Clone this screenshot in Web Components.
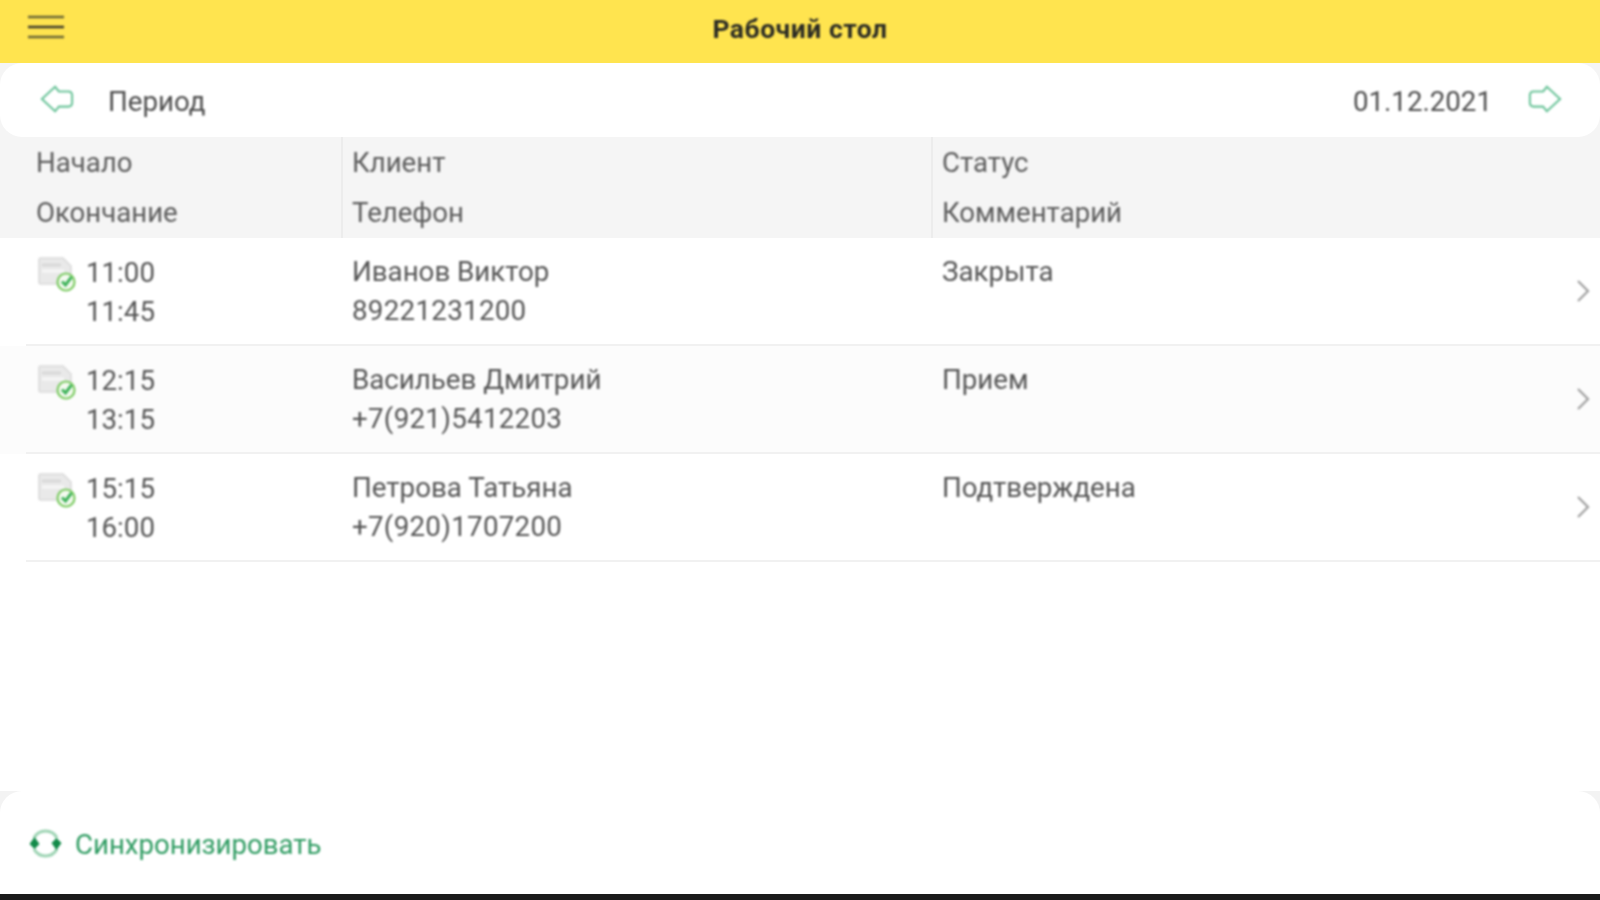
<!DOCTYPE html>
<html lang="ru">
<head>
<meta charset="utf-8">
<title>Рабочий стол</title>
<style>
    html, body {
        margin: 0;
        height: 100%;
        background: #fff;
        font-family: Roboto, "Liberation Sans", sans-serif;
        color: #4a4a4a;
    }
    desk-app {
        height: 900px;
    }
</style>
</head>
<body>
<desk-app>
    <app-header title="Рабочий стол"></app-header>
    <period-bar label="Период" date="01.12.2021"></period-bar>
    <list-head></list-head>
    <visit-row start="11:00" end="11:45" client="Иванов Виктор" phone="89221231200" status="Закрыта"></visit-row>
    <visit-row start="12:15" end="13:15" client="Васильев Дмитрий" phone="+7(921)5412203" status="Прием" shaded></visit-row>
    <visit-row start="15:15" end="16:00" client="Петрова Татьяна" phone="+7(920)1707200" status="Подтверждена"></visit-row>
    <sync-footer slot="footer">Синхронизировать</sync-footer>
</desk-app>

<script>
class DeskApp extends HTMLElement {
    constructor() {
        super();
        this.shadow = this.attachShadow({mode: 'open'});
    }

    connectedCallback() {
        this.shadow.innerHTML = `
            <style>
                :host {
                    display: flex;
                    flex-direction: column;
                    background: #fff;
                }
                .list {
                    flex: 1;
                }
                .bottom {
                    border-bottom: 6px solid #1a1a1a;
                }
            </style>
            <div class="list"><slot></slot></div>
            <div class="bottom"><slot name="footer"></slot></div>
        `;
    }
}

class AppHeader extends HTMLElement {
    constructor() {
        super();
        this.shadow = this.attachShadow({mode: 'open'});
    }

    connectedCallback() {
        this.shadow.innerHTML = `
            <style>
                :host {
                    display: grid;
                    grid-template-columns: 1fr auto 1fr;
                    align-items: center;
                    height: 63px;
                    box-sizing: border-box;
                    padding: 0 28px 7px;
                    background: #ffe44f;
                }
                svg {
                    display: block;
                    margin-bottom: 3px;
                    filter: blur(0.85px);
                }
                h1 {
                    margin: 0;
                    font-size: 26.5px;
                    font-weight: 700;
                    letter-spacing: 0.5px;
                    color: #2b2b24;
                    filter: blur(0.85px);
                }
            </style>
            <svg width="36" height="26" viewBox="0 0 36 26">
                <path d="M0 3h36M0 23h36" fill="none" stroke="#6a6636" stroke-width="2.6"/>
                <path d="M0 13h36" fill="none" stroke="#3c3b2c" stroke-width="2.4"/>
            </svg>
            <h1>${this.getAttribute('title')}</h1>
        `;
    }
}

class PeriodBar extends HTMLElement {
    constructor() {
        super();
        this.shadow = this.attachShadow({mode: 'open'});
    }

    connectedCallback() {
        const arrow = 'M2 15 L16 2 L20 7 L30 7 Q34 7 34 11 L34 19 Q34 23 30 23 L20 23 L16 28 Z';
        this.shadow.innerHTML = `
            <style>
                :host {
                    display: block;
                    background: #f5f5f5;
                }
                .bar {
                    display: flex;
                    align-items: center;
                    height: 74px;
                    padding: 0 38px 0 40px;
                    border-radius: 22px;
                    background: #fff;
                    font-size: 27.7px;
                    color: #4d4d4d;
                }
                svg {
                    display: block;
                    flex: none;
                    filter: blur(0.85px);
                }
                .label, .date {
                    padding-top: 2px;
                    filter: blur(0.85px);
                }
                .label {
                    margin-left: 34px;
                    flex: 1;
                }
                .date {
                    margin-right: 36px;
                }
                .next {
                    transform: scaleX(-1);
                }
            </style>
            <div class="bar">
                <svg width="34" height="32" viewBox="0 0 36 32"><path d="${arrow}" fill="none" stroke="#6cc49a" stroke-width="2.2"/></svg>
                <span class="label">${this.getAttribute('label')}</span>
                <span class="date">${this.getAttribute('date')}</span>
                <svg class="next" width="34" height="32" viewBox="0 0 36 32"><path d="${arrow}" fill="none" stroke="#6cc49a" stroke-width="2.2"/></svg>
            </div>
        `;
    }
}

class ListHead extends HTMLElement {
    constructor() {
        super();
        this.shadow = this.attachShadow({mode: 'open'});
    }

    connectedCallback() {
        this.shadow.innerHTML = `
            <style>
                :host {
                    display: grid;
                    grid-template-columns: 341px 590px 1fr;
                    height: 101px;
                    background: #f5f5f5;
                    font-size: 27.6px;
                    color: #5c5c5c;
                }
                div {
                    display: flex;
                    flex-direction: column;
                    gap: 20px;
                    padding: 11px 0 0 9px;
                    border-left: 2px solid #ececec;
                }
                div:first-of-type {
                    padding-left: 36px;
                    border-left: 0;
                }
                span {
                    line-height: 30px;
                    filter: blur(0.85px);
                }
            </style>
            <div><span>Начало</span><span>Окончание</span></div>
            <div><span>Клиент</span><span>Телефон</span></div>
            <div><span>Статус</span><span>Комментарий</span></div>
        `;
    }
}

class VisitRow extends HTMLElement {
    constructor() {
        super();
        this.shadow = this.attachShadow({mode: 'open'});
    }

    connectedCallback() {
        this.shadow.innerHTML = `
            <style>
                :host {
                    display: block;
                    background: ${this.hasAttribute('shaded') ? '#fcfcfc' : '#fff'};
                }
                .row {
                    display: grid;
                    grid-template-columns: 343px 590px 1fr 40px;
                    height: 106px;
                    font-size: 27.7px;
                    color: #555;
                }
                .rule {
                    height: 2px;
                    margin-left: 26px;
                    background: #f1f1f1;
                }
                .time {
                    display: flex;
                    gap: 9px;
                    padding: 20px 0 0 37px;
                }
                .time svg {
                    flex: none;
                    margin-top: -2px;
                }
                svg {
                    filter: blur(0.85px);
                }
                .stack {
                    display: flex;
                    flex-direction: column;
                    gap: 9px;
                }
                .stack span {
                    line-height: 30px;
                    filter: blur(0.85px);
                }
                .phone {
                    letter-spacing: 0.3px;
                }
                .cell {
                    padding: 19px 0 0 9px;
                }
                .chev {
                    display: flex;
                    align-items: center;
                    padding-left: 15px;
                }
            </style>
            <div class="row">
                <div class="time">
                    <svg width="40" height="36" viewBox="0 0 40 36">
                        <path d="M2 4 Q2 2 4 2 L26 2 L34 10 L34 26 Q34 28 32 28 L4 28 Q2 28 2 26 Z" fill="#e9e9e9" stroke="#dadada" stroke-width="1.6"/>
                        <path d="M5 9h19" stroke="#d6d6d6" stroke-width="2.4"/>
                        <path d="M5 15h22" stroke="#f6f6f6" stroke-width="3"/>
                        <circle cx="29" cy="26" r="8.5" fill="#f4faf0" stroke="#7ccb63" stroke-width="2.2"/>
                        <path d="M25 25.5l3.5 3.5 6-8" fill="none" stroke="#3fb35a" stroke-width="3"/>
                    </svg>
                    <div class="stack"><span>${this.getAttribute('start')}</span><span>${this.getAttribute('end')}</span></div>
                </div>
                <div class="cell">
                    <div class="stack"><span>${this.getAttribute('client')}</span><span class="phone">${this.getAttribute('phone')}</span></div>
                </div>
                <div class="cell"><div class="stack"><span>${this.getAttribute('status')}</span></div></div>
                <div class="chev">
                    <svg width="16" height="24" viewBox="0 0 16 24"><path d="M3 2l10 10L3 22" fill="none" stroke="#a0a0a0" stroke-width="2.2"/></svg>
                </div>
            </div>
            <div class="rule"></div>
        `;
    }
}

class SyncFooter extends HTMLElement {
    constructor() {
        super();
        this.shadow = this.attachShadow({mode: 'open'});
    }

    connectedCallback() {
        this.shadow.innerHTML = `
            <style>
                :host {
                    display: block;
                    background: #f3f3f3;
                }
                .foot {
                    display: flex;
                    align-items: center;
                    gap: 14px;
                    height: 103px;
                    box-sizing: border-box;
                    padding: 4px 0 0 30px;
                    border-radius: 22px 22px 0 0;
                    background: #fff;
                    font-size: 27.6px;
                    color: #2f9c62;
                }
                svg {
                    display: block;
                    margin-top: -3px;
                    overflow: visible;
                    filter: blur(0.85px);
                }
                span {
                    filter: blur(0.85px);
                }
            </style>
            <div class="foot">
                <svg width="31" height="31" viewBox="0 0 31 31">
                    <path d="M4 10A13 13 0 0 1 27 10M27 21A13 13 0 0 1 4 21" fill="none" stroke="#9ed4b4" stroke-width="3"/>
                    <path d="M-0.5 16L4.5 9 9.5 16 4.5 21zM21.5 15L26.5 10 31.5 15 26.5 22z" fill="#128a48"/>
                </svg>
                <span><slot></slot></span>
            </div>
        `;
    }
}

window.customElements.define('desk-app', DeskApp);
window.customElements.define('app-header', AppHeader);
window.customElements.define('period-bar', PeriodBar);
window.customElements.define('list-head', ListHead);
window.customElements.define('visit-row', VisitRow);
window.customElements.define('sync-footer', SyncFooter);
</script>
</body>
</html>
